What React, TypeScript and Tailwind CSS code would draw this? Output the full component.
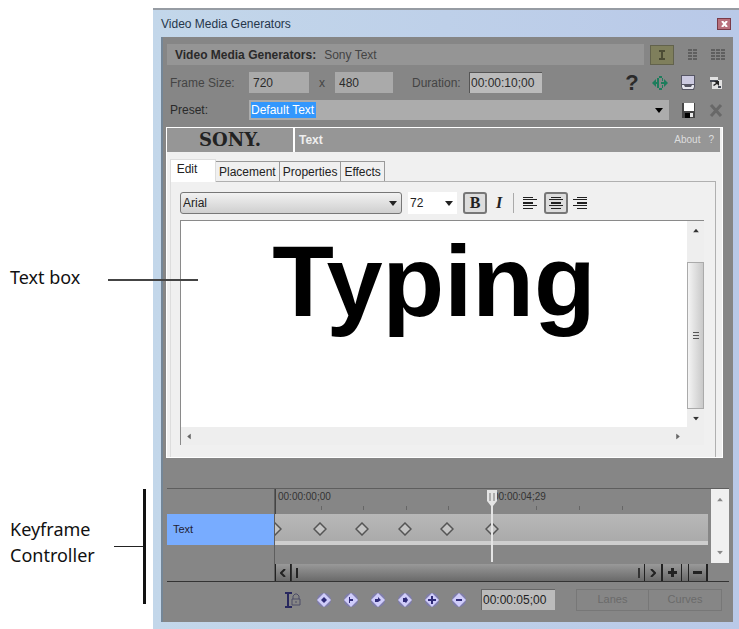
import type { ReactNode } from 'react';

const keyframes = [0, 45, 87, 130, 172, 217];
const ticks = [45, 87, 130, 172, 260, 303, 346];
const tabs = ['Placement', 'Properties', 'Effects'];

const Arrow = ({ className = '' }: { className?: string }) => (
  <svg viewBox="0 0 8 5" className={`pointer-events-none h-[5px] w-2 shrink-0 fill-current ${className}`}>
    <path d="M0 0h8L4 5z" />
  </svg>
);

const IconButton = ({ label, children }: { label: string; children: ReactNode }) => (
  <button aria-label={label} className="flex h-5 w-5 shrink-0 items-center justify-center">
    {children}
  </button>
);

const DotGrid = ({ cols }: { cols: number }) => (
  <svg width={cols * 5} height="12" fill="#5f5f5f">
    {Array.from({ length: cols * 4 }, (_, i) => (
      <rect key={i} x={(i % cols) * 5} y={Math.floor(i / cols) * 3} width="4" height="2" />
    ))}
  </svg>
);

const AlignIcon = ({ side }: { side: 'left' | 'center' | 'right' }) => {
  const x = { left: 0, center: 2, right: 4 }[side];
  return (
    <svg width="14" height="12" fill="#222">
      <rect x={x} y="0" width="10" height="1" />
      <rect x="0" y="2" width="14" height="1" />
      <rect x={x} y="5" width="10" height="2" />
      <rect x="0" y="8" width="14" height="1" />
      <rect x={x} y="11" width="10" height="1" />
    </svg>
  );
};

const KeyIcon = ({ glyph }: { glyph: string }) => (
  <svg width="18" height="16" viewBox="0 0 18 16">
    <circle cx="9" cy="8" r="7" fill="#7f7dab" />
    <path d="M9 1l7 7-7 7-7-7z" fill="#cfccfa" />
    <path d={glyph} fill="#302c78" />
  </svg>
);

const keyButtons = [
  { label: 'First keyframe', glyph: 'M6 8l3-3 3 3-3 3z' },
  { label: 'Previous keyframe', glyph: 'M7 5h1v2h3v2H8v2H7z' },
  { label: 'Next keyframe', glyph: 'M6 7h3V5l3 3-3 2H6z' },
  { label: 'Last keyframe', glyph: 'M7 6h2l1-1 2 3-2 3-1-1H7z' },
  { label: 'Add keyframe', glyph: 'M8 4h2v3h3v2h-3v3H8V9H5V7h3z' },
  { label: 'Delete keyframe', glyph: 'M6 7h6v2H6z' },
];

const Notes = () => (
  <aside className="relative w-[153px] shrink-0 font-['Noto_Sans',sans-serif] text-lg leading-[26px] text-[#111]">
    <p className="pt-[264px] pl-[10px]">Text box</p>
    <p className="pt-[226px] pl-[10px]">
      Keyframe
      <br />
      Controller
    </p>
    {/* leader lines */}
    <div className="absolute top-[279px] left-[108px] z-10 h-[2px] w-[90px] bg-[#444]" />
    <div className="absolute top-[546px] left-[114px] h-px w-[30px] bg-[#222]" />
    <div className="absolute top-[489px] left-[143px] h-[115px] w-[3px] bg-[#111]" />
  </aside>
);

const TopBar = () => (
  <div className="flex flex-col gap-[7px] pt-[7px] pr-[7px] pl-1 text-[#2a2a2a]">
    <div className="flex h-[21px] items-center">
      <div className="flex h-full flex-1 items-center gap-2 bg-[#959595] pl-2">
        <b>Video Media Generators:</b>
        <span className="text-[#444]">Sony Text</span>
      </div>
      <div className="flex w-[82px] items-center justify-between pl-[6px]">
        <button aria-label="Single view" className="flex h-5 w-6 items-center justify-center border border-[#62624c] bg-[#7f7f5c]">
          <svg width="8" height="10" fill="#4c4c35">
            <path d="M1 0h6v2H5v6h2v2H1V8h2V2H1z" />
          </svg>
        </button>
        <button aria-label="Two columns">
          <DotGrid cols={2} />
        </button>
        <button aria-label="Three columns">
          <DotGrid cols={3} />
        </button>
      </div>
    </div>

    <div className="flex h-[21px] items-center">
      <label htmlFor="width" className="w-[82px] pl-[3px] text-[#444]">Frame Size:</label>
      <input id="width" defaultValue="720" className="h-full w-[60px] bg-[#aaa] px-1" />
      <label htmlFor="height" className="w-[26px] text-center text-[#444]">x</label>
      <input id="height" defaultValue="480" className="h-full w-[58px] bg-[#aaa] px-1" />
      <label htmlFor="duration" className="w-[76px] pl-[19px] text-[#444]">Duration:</label>
      <input id="duration" defaultValue="00:00:10;00" className="h-full w-[73px] border-t border-l border-[#555] bg-[#bbb] pl-px" />
      <div className="ml-auto flex gap-2">
        <IconButton label="Help">
          <span className="text-[22px] leading-5 font-bold">?</span>
        </IconButton>
        <IconButton label="Match media length">
          <svg width="16" height="14" fill="#1d7d5c">
            <path d="M0 7l4-4v3h1V2h2V0h3v2H7v10h3v2H7v-2H5V8H4v3z" />
            <path d="M16 7l-4-4v3H9v2h3v3zM10 2h1v3h-1zM10 9h1v3h-1z" />
          </svg>
        </IconButton>
        <IconButton label="Media properties">
          <svg width="16" height="17">
            <path d="M1 1h14v11l-1 4H2l-1-4z" fill="#555564" />
            <path d="M2 2h12v8H2z" fill="#cbc9e0" />
            <path d="M2 11h2l1 2h6l1-2h2v2l-1 2H3l-1-2z" fill="#e6e6ee" />
          </svg>
        </IconButton>
        <IconButton label="Event properties">
          <svg width="14" height="14">
            <path d="M1 1h8v3h4v9H3V6H1z" fill="#e2e2e2" />
            <path d="M1 4h8v2H1zM9 10h3v2H9z" fill="#454a55" />
            <path d="M5 5h5v5L8 8l-3 2-1-1 3-2z" fill="#222" />
          </svg>
        </IconButton>
      </div>
    </div>

    <div className="flex h-5 items-center">
      <label htmlFor="preset" className="w-[82px] pl-[3px]">Preset:</label>
      <div className="flex h-full flex-1 items-center bg-[#acacac] px-[2px]">
        <select id="preset" className="h-4 w-[65px] appearance-none bg-[#3297fd] leading-4 text-white">
          <option>Default Text</option>
        </select>
        <Arrow className="mr-1 ml-auto text-black" />
      </div>
      <div className="flex gap-2 pl-[9px]">
        <IconButton label="Save preset">
          <svg width="13" height="15">
            <path d="M0 0h13v15H0z" fill="#444" />
            <path d="M2 0h10v8H2z" fill="#fff" />
            <path d="M3 10h5v5H3z" fill="#000" />
            <path d="M8 10h3v4H8z" fill="#e8e8e8" />
          </svg>
        </IconButton>
        <IconButton label="Delete preset">
          <svg width="14" height="14" stroke="#686868" strokeWidth="3">
            <path d="M2 2l10 11M12 2L2 13" />
          </svg>
        </IconButton>
      </div>
    </div>
  </div>
);

const Editor = () => (
  <div className="flex h-[225px] flex-col border-t border-l border-[#8a8a8a] bg-[#eee]">
    <div className="flex min-h-0 flex-1">
      <textarea
        aria-label="Text"
        defaultValue="Typing"
        className="min-w-0 flex-1 resize-none overflow-hidden bg-white pt-[2px] text-center text-[101px] leading-[116px] font-bold text-black outline-none"
      />
      <div className="flex w-[17px] flex-col items-center text-[#333]">
        <button aria-label="Scroll up" className="flex h-[41px] w-full justify-center pt-[7px]">
          <Arrow className="rotate-180 scale-75" />
        </button>
        <div className="flex w-full flex-1 flex-col items-center justify-center gap-[2px] border border-[#aaa] bg-linear-to-r from-[#f4f4f4] to-[#c9c9c9]">
          <i className="h-px w-[6px] bg-[#555]" />
          <i className="h-px w-[6px] bg-[#555]" />
          <i className="h-px w-[6px] bg-[#555]" />
        </div>
        <button aria-label="Scroll down" className="flex h-[18px] w-full items-center justify-center">
          <Arrow className="scale-75" />
        </button>
      </div>
    </div>
    <div className="flex h-[18px] shrink-0 items-center justify-between pr-[22px] pl-1 text-[#666]">
      <button aria-label="Scroll left">
        <Arrow className="rotate-90 scale-75" />
      </button>
      <button aria-label="Scroll right">
        <Arrow className="-rotate-90 scale-75" />
      </button>
    </div>
  </div>
);

const TextPanel = () => (
  <section className="mt-[7px] mr-[10px] ml-[3px] border border-white bg-[#f0f0f0] pr-[2px]">
    <header className="flex h-6 items-center bg-[#969696] text-white">
      <div className="w-[126px] text-center font-['DejaVu_Serif',serif] text-lg leading-6 font-bold text-[#222]">SONY.</div>
      <div className="h-full w-[2px] bg-white" />
      <b className="pl-1 text-[#eee]">Text</b>
      <div className="ml-auto flex gap-2 pr-[6px] text-[10px] text-[#ddd]">
        <a href="#about">About</a>
        <a href="#help">?</a>
      </div>
    </header>

    <div className="flex items-end pt-[7px] pl-[3px] text-[#222]">
      <button className="z-10 -mb-px h-[23px] w-[46px] border-x border-t border-[#ddd] bg-white pr-3 pb-1">Edit</button>
      {tabs.map((tab) => (
        <button key={tab} className="h-5 border-t border-r border-[#999] px-[3px]">
          {tab}
        </button>
      ))}
    </div>

    <div className="mr-1 ml-[3px] border-x border-t border-[#b0b0b0] border-l-[#ddd] pt-[10px] pr-[11px] pb-3 pl-[9px]">
      <div className="mb-[6px] flex h-[22px] items-center text-[#222]">
        <div className="flex h-full w-[222px] items-center rounded-[3px] border border-[#777] bg-linear-to-b from-[#f2f2f2] to-[#cfcfcf] pr-1 pl-[2px]">
          <select aria-label="Font" className="flex-1 appearance-none">
            <option>Arial</option>
          </select>
          <Arrow />
        </div>
        <div className="ml-[6px] flex h-full w-[49px] items-center bg-white pr-1 pl-[2px]">
          <select aria-label="Font size" className="flex-1 appearance-none">
            <option>72</option>
          </select>
          <Arrow />
        </div>
        <button className="ml-[6px] h-[22px] w-6 rounded-[3px] border-2 border-[#777] bg-[#ddd] font-['Liberation_Serif',serif] text-base leading-4 font-bold">
          B
        </button>
        <button className="w-6 font-['Liberation_Serif',serif] text-base font-bold italic">I</button>
        <div className="mx-[2px] h-5 w-px bg-[#aaa]" />
        <button aria-label="Align left" className="flex w-7 justify-center">
          <AlignIcon side="left" />
        </button>
        <button aria-label="Align center" className="flex h-[22px] w-6 items-center justify-center rounded-[3px] border-2 border-[#777] bg-[#ddd]">
          <AlignIcon side="center" />
        </button>
        <button aria-label="Align right" className="flex w-6 justify-center">
          <AlignIcon side="right" />
        </button>
      </div>
      <Editor />
    </div>
  </section>
);

const Timeline = () => (
  <section className="mt-[30px] mr-1 ml-1 flex h-[94px] border-t border-b border-t-[#5e5e5e] border-b-[#333]">
    <div className="w-[108px] border-r border-[#5e5e5e] pt-[25px]">
      <div className="flex h-[31px] items-center bg-[#78acff] pl-[6px] text-[11px] text-[#223]">Text</div>
    </div>

    <div className="relative flex flex-1 flex-col">
      <div className="relative h-[25px] border-l border-[#444] text-[10px] leading-3 text-[#333]">
        <span className="absolute top-[2px] left-[2px]">00:00:00;00</span>
        <span className="absolute top-[2px] left-[217px]">00:00:04;29</span>
        {ticks.map((x) => (
          <i key={x} className="absolute bottom-1 h-1 w-px bg-[#666]" style={{ left: x }} />
        ))}
      </div>
      <div className="relative h-[31px] overflow-hidden border-b-4 border-[#cecece] bg-linear-to-b from-[#b8b8b8] to-[#aaa]">
        {keyframes.map((x) => (
          <svg key={x} width="14" height="14" className="absolute top-2 -ml-[7px]" style={{ left: x }}>
            <path d="M7 1l6 6-6 6-6-6z" fill="#c4c4c4" stroke="#555" strokeWidth="1.5" />
          </svg>
        ))}
      </div>
      {/* playhead */}
      <svg width="12" height="72" className="absolute top-px left-[211px]">
        <path d="M1 0h10v11l-4 5v56H5V16l-4-5z" fill="#e4e4e4" />
        <path d="M4 3v8M8 3v8" stroke="#777" />
      </svg>
      <div className="mt-auto flex h-[17px] bg-linear-to-b from-[#999] to-[#6a6a6a] text-[#222]">
        <button aria-label="Scroll back" className="flex w-4 items-center justify-center border-x border-[#222]">
          <svg width="6" height="8" fill="none" stroke="currentColor" strokeWidth="2"><path d="M5 0L1 4l4 4" /></svg>
        </button>
        <div className="flex flex-1 items-center justify-between border-l border-[#333] px-1">
          <i className="h-[10px] w-[2px] bg-[#222]" />
          <i className="h-[10px] w-[2px] bg-[#333]" />
        </div>
        <button aria-label="Scroll forward" className="flex w-[18px] items-center justify-center border-x border-[#222]">
          <svg width="6" height="8" fill="none" stroke="currentColor" strokeWidth="2"><path d="M1 0l4 4-4 4" /></svg>
        </button>
        <button aria-label="Zoom in" className="flex w-5 items-center justify-center border-x border-[#222]">
          <svg width="9" height="9" fill="currentColor"><path d="M3 0h3v3h3v3H6v3H3V6H0V3h3z" /></svg>
        </button>
        <div className="w-[6px]" />
        <button aria-label="Zoom out" className="flex w-5 items-center justify-center border-r-2 border-l border-[#222]">
          <svg width="9" height="3" fill="currentColor"><path d="M0 0h9v3H0z" /></svg>
        </button>
      </div>
    </div>

    <div className="ml-[3px] flex h-[74px] w-[18px] flex-col items-center justify-between bg-[#f0f0f0] py-2 text-[#888]">
      <button aria-label="Tracks up">
        <Arrow className="rotate-180 scale-75" />
      </button>
      <button aria-label="Tracks down">
        <Arrow className="scale-75" />
      </button>
    </div>
  </section>
);

const Footer = () => (
  <footer className="flex h-10 items-center pr-[11px] pb-[5px] pl-[121px]">
    <button aria-label="Sync cursor" className="mr-[13px]">
      <svg width="18" height="18" fill="none">
        <path d="M1 2h7M4 2v14M1 16h7" stroke="#28285f" strokeWidth="2" />
        <path d="M9 8V5l2-2h2l2 2v3M8 8h8v6H8zM11 11h2" stroke="#4c4c66" />
      </svg>
    </button>
    <div className="flex gap-[9px]">
      {keyButtons.map(({ label, glyph }) => (
        <button key={label} aria-label={label}>
          <KeyIcon glyph={glyph} />
        </button>
      ))}
    </div>
    <input aria-label="Cursor position" defaultValue="00:00:05;00" className="ml-[13px] h-[21px] w-[74px] border-t border-l border-[#666] bg-[#bbb] pl-px text-[#222]" />
    <div className="ml-auto flex text-[#6a6a6a]">
      <button disabled className="h-[22px] w-[73px] border border-[#777] text-[11px]">Lanes</button>
      <button disabled className="h-[22px] w-[73px] border-y border-r border-[#777] text-[11px]">Curves</button>
    </div>
  </footer>
);

const App = () => {
  return (
    <main className="flex w-full bg-white">
      <Notes />
      <div className="mt-2 min-w-0 flex-1 border-t-2 border-[#969ca3] bg-linear-to-r from-[#c3d7ea] to-[#b9c9e8] pr-[6px] pb-[7px] pl-2 font-['Liberation_Sans',Arial,sans-serif] text-xs">
        <div className="flex h-[27px] items-center justify-between text-[#26364a]">
          <h1>Video Media Generators</h1>
          <button aria-label="Close" className="mr-[2px] flex h-3 w-[14px] items-center justify-center border border-[#7a3b48] bg-[#b8707c]">
            <svg width="7" height="6" stroke="#fff" strokeWidth="2"><path d="M1 0l5 6M6 0L1 6" /></svg>
          </button>
        </div>
        <div className="border-l-2 border-[#748697] bg-[#868686]">
          <TopBar />
          <TextPanel />
          <Timeline />
          <Footer />
        </div>
      </div>
    </main>
  );
};

export default App;
